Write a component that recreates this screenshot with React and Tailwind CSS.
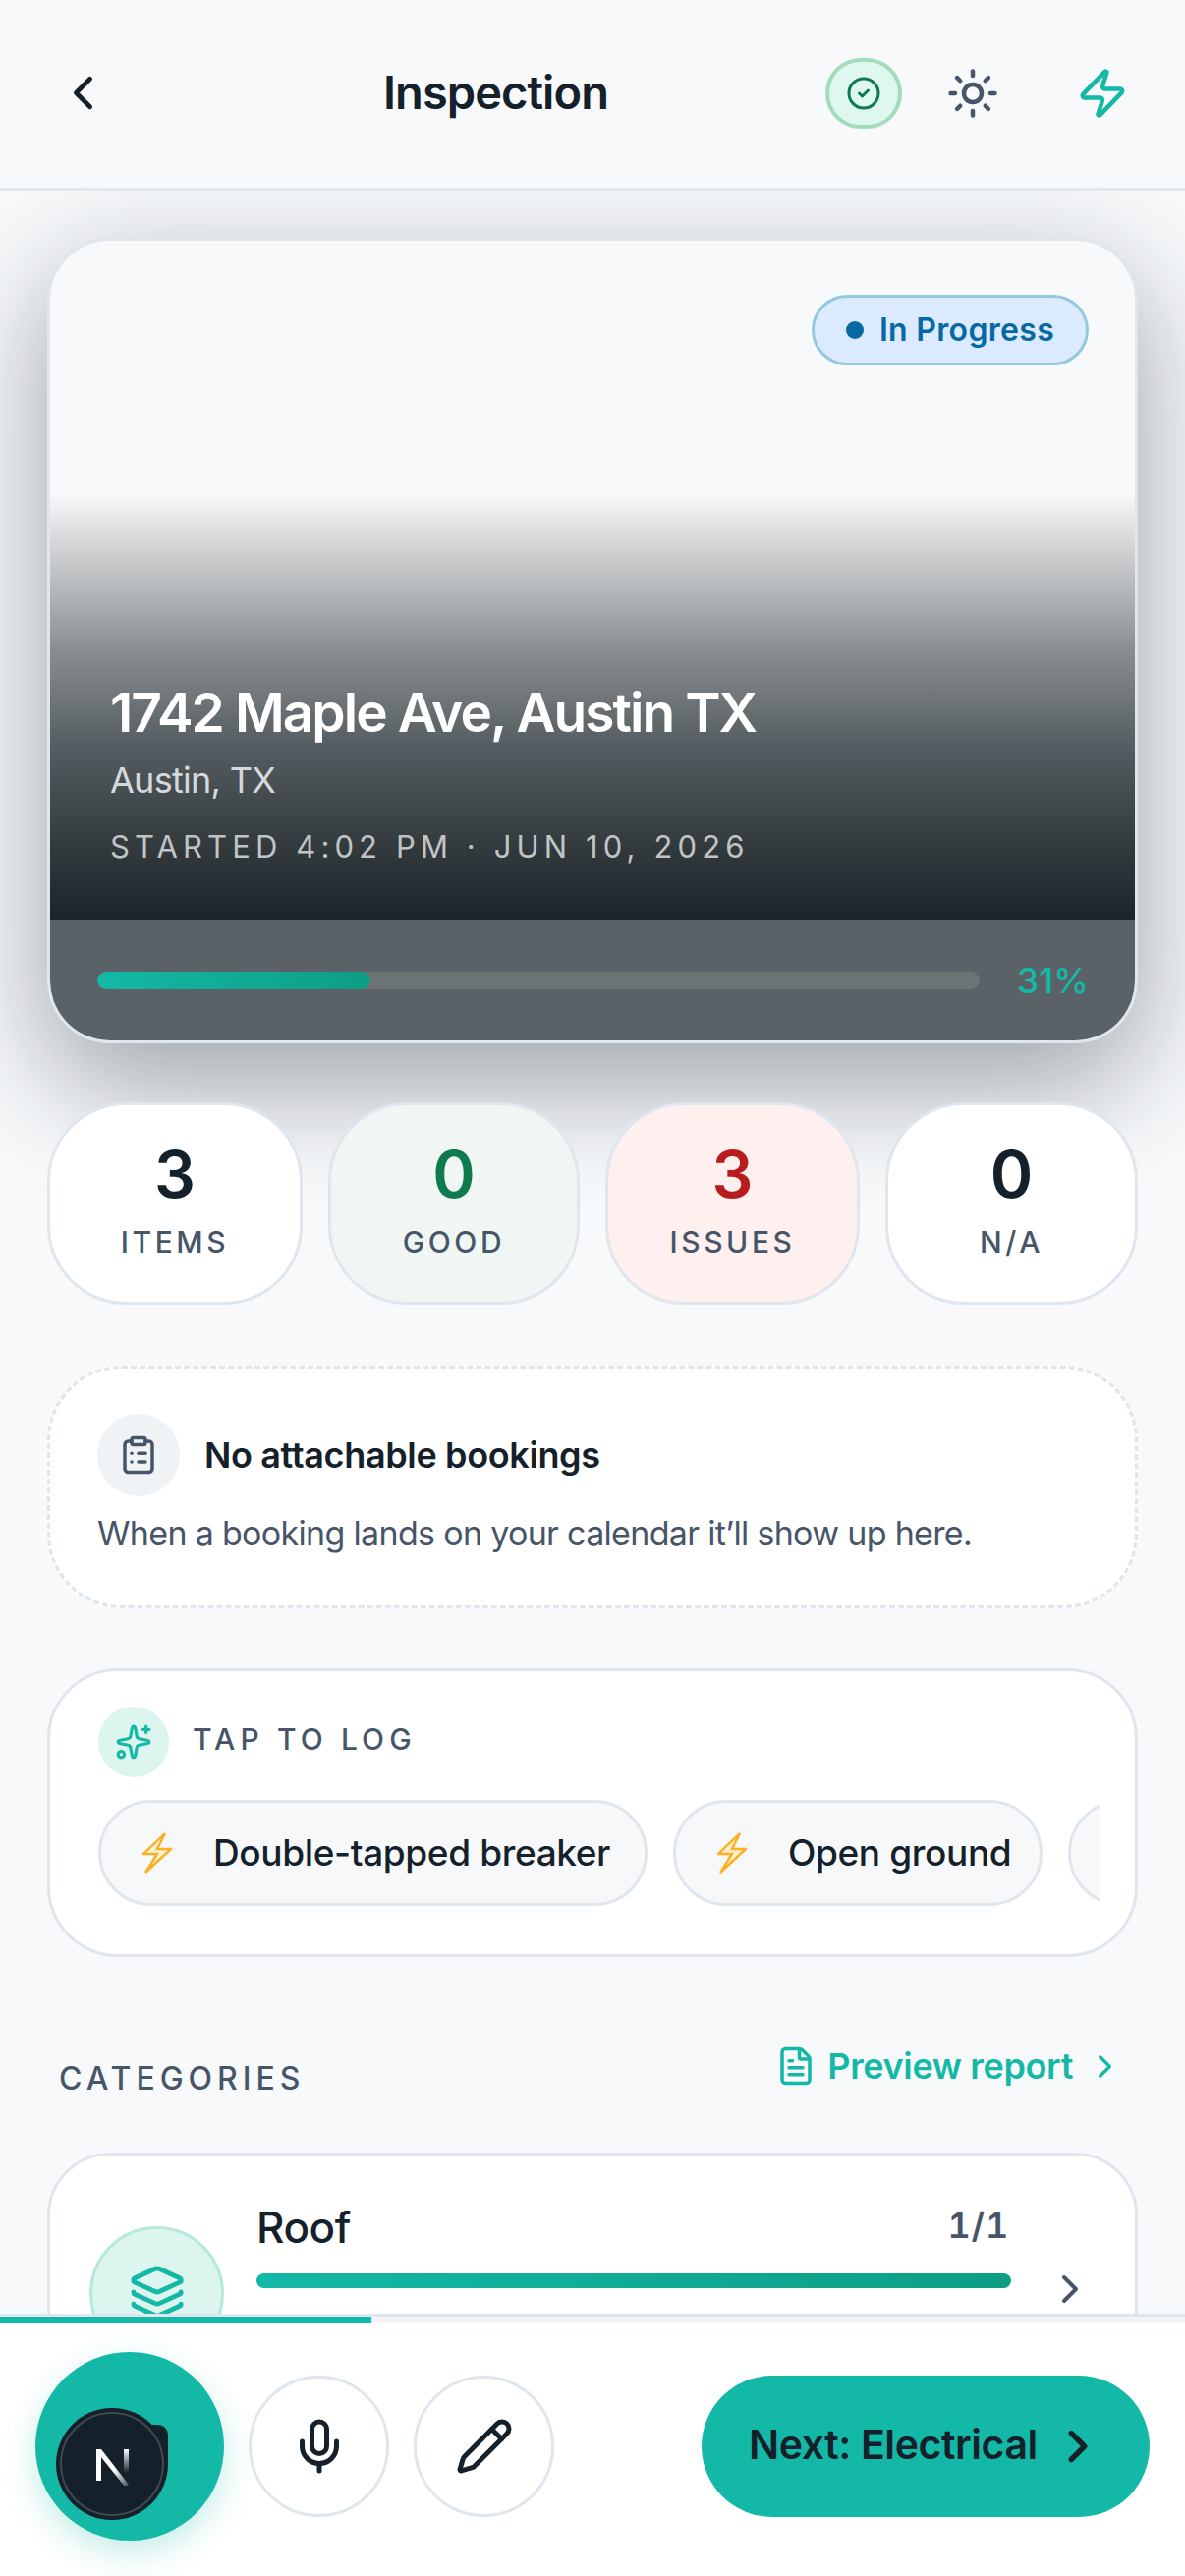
import { ChevronLeft, ChevronRight, CircleCheck, ClipboardList, FileText, Layers, Mic, Pencil, Sparkles, Sun, Zap } from 'lucide-react';

const stats = [
  { value: '3', label: 'ITEMS', bg: 'bg-white', color: 'text-[#14202a]' },
  { value: '0', label: 'GOOD', bg: 'bg-[#f0f6f3]', color: 'text-[#0f7a4d]' },
  { value: '3', label: 'ISSUES', bg: 'bg-[#fef0ef]', color: 'text-[#b91c1c]' },
  { value: '0', label: 'N/A', bg: 'bg-white', color: 'text-[#14202a]' },
];

const chips = [
  { label: 'Double-tapped breaker', width: 'w-[559px]' },
  { label: 'Open ground', width: 'w-[376px]' },
];

function Bolt() {
  return (
    <svg width="30" height="42" viewBox="0 0 30 42" className="shrink-0">
      <path d="M23 1 1 22h14L3 41 29 17H15z" fill="#fdf0d0" stroke="#fbb024" strokeWidth="2.4" strokeLinejoin="miter" />
    </svg>
  );
}

function Chip({ label, width }) {
  return (
    <div className={`${width} h-[108px] shrink-0 rounded-full border-[3px] border-[#dfe6ee] bg-[#f6f8fa] flex items-center pl-[42px] gap-[42px]`}>
      <Bolt />
      <span className="text-[37px] font-medium text-[#14202a] whitespace-nowrap tracking-[-0.01em]">{label}</span>
    </div>
  );
}

export default function App() {
  return (
    <div className="w-[1206px] h-[2622px] overflow-hidden flex flex-col bg-[#f7f9fb] font-['Inter',sans-serif]">
      {/* Header */}
      <header className="h-[194px] shrink-0 border-b-[3px] border-[#dfe6ee] flex items-center pl-[56px] pr-[57px] pb-[2px] relative z-10">
        <ChevronLeft size={57} strokeWidth={2} className="text-[#14202a] shrink-0" />
        <h1 className="ml-[277px] text-[47px] font-semibold text-[#14202a] tracking-[-0.02em] whitespace-nowrap">Inspection</h1>
        <div className="ml-auto flex items-center">
          <div className="w-[78px] h-[72px] rounded-full bg-[#def7ef] border-[4px] border-[#a3dcbc] flex items-center justify-center">
            <CircleCheck size={36} strokeWidth={2} className="text-[#0f7a4d]" />
          </div>
          <Sun size={54} strokeWidth={2} className="ml-[45px] text-[#475569]" />
          <Zap size={54} strokeWidth={2} className="ml-[78px] text-[#14b8a6]" />
        </div>
      </header>

      <main className="flex-1 min-h-0 overflow-hidden px-[48px] pt-[48px]">
        {/* Hero */}
        <section className="h-[820px] rounded-[64px] border-[3px] border-[#dfe6ee] shadow-[0_40px_120px_rgba(20,30,40,0.4)] overflow-hidden flex flex-col bg-[#f7f9fb]">
          <div className="h-[691px] shrink-0 flex flex-col bg-[linear-gradient(to_bottom,#f7f9fb_0px,#f7f9fb_257px,#d0d2d4_314px,#a8abad_374px,#8a8f92_414px,#565d62_514px,#343b3e_614px,#1a242b_691px)]">
            <div className="flex justify-end pt-[55px] pr-[47px]">
              <div className="h-[72px] w-[282px] rounded-full bg-[#dbeafe] border-[3px] border-[#93c9de] flex items-center justify-center gap-[16px]">
                <span className="w-[18px] h-[18px] rounded-full bg-[#0669a3]" />
                <span className="text-[32px] font-semibold text-[#0669a3] tracking-[0.01em] whitespace-nowrap">In Progress</span>
              </div>
            </div>
            <div className="mt-auto pl-[61px] pb-[54px]">
              <h2 className="text-[55px] leading-[64px] font-semibold text-white tracking-[-0.035em] whitespace-nowrap">1742 Maple Ave, Austin TX</h2>
              <p className="mt-[15px] text-[36px] leading-[44px] text-[#d6d9db] tracking-[-0.02em]">Austin, TX</p>
              <p className="mt-[26px] text-[31px] leading-[40px] text-[#c0c4c7] tracking-[0.165em] whitespace-nowrap">STARTED 4:02 PM · JUN 10, 2026</p>
            </div>
          </div>
          <div className="flex-1 bg-[#5a6268] flex items-center pl-[48px] pr-[47px] gap-[38px]">
            <div className="flex-1 h-[18px] rounded-full bg-[#6b7373] overflow-hidden">
              <div className="w-[31%] h-full rounded-full bg-[linear-gradient(to_right,#14b8a6,#0d9e84)]" />
            </div>
            <span className="text-[36px] font-medium text-[#14b8a6]">31%</span>
          </div>
        </section>

        {/* Stats */}
        <section className="mt-[60px] grid grid-cols-[260px_256px_259px_257px] gap-[26px]">
          {stats.map((s) => (
            <div key={s.label} className={`h-[206px] rounded-[80px] border-[3px] border-[#dfe6ee] ${s.bg} flex flex-col items-center pt-[30px]`}>
              <span className={`text-[66px] leading-[80px] font-semibold ${s.color}`}>{s.value}</span>
              <span className="mt-[9px] text-[30px] leading-[40px] font-[550] text-[#475569] tracking-[0.12em]">{s.label}</span>
            </div>
          ))}
        </section>

        {/* Bookings */}
        <section className="mt-[62px] h-[247px] rounded-[76px] border-[3px] border-dashed border-[#dfe6ee] bg-white pl-[48px] pt-[46px]">
          <div className="flex items-center gap-[25px]">
            <div className="w-[84px] h-[84px] rounded-full bg-[#f0f3f6] flex items-center justify-center">
              <ClipboardList size={42} strokeWidth={2} className="text-[#475569]" />
            </div>
            <span className="text-[36px] font-semibold text-[#14202a] tracking-[-0.01em]">No attachable bookings</span>
          </div>
          <p className="mt-[16px] text-[34px] leading-[44px] text-[#475569] tracking-[-0.02em]">When a booking lands on your calendar it’ll show up here.</p>
        </section>

        {/* Tap to log */}
        <section className="mt-[61px] h-[294px] rounded-[72px] border-[3px] border-[#dfe6ee] bg-white pl-[49px] pr-[36px] pt-[36px]">
          <div className="flex items-center gap-[24px]">
            <div className="w-[72px] h-[72px] rounded-full bg-[#dcf6ef] flex items-center justify-center">
              <Sparkles size={38} strokeWidth={2} className="text-[#14b8a6]" />
            </div>
            <span className="pb-[5px] text-[30px] font-[550] text-[#475569] tracking-[0.17em]">TAP TO LOG</span>
          </div>
          <div className="mt-[23px] flex gap-[26px] overflow-hidden">
            {chips.map((c) => (
              <Chip key={c.label} label={c.label} width={c.width} />
            ))}
            <div className="w-[200px] h-[108px] shrink-0 rounded-full border-[3px] border-[#dfe6ee] bg-[#f6f8fa]" />
          </div>
        </section>

        {/* Categories */}
        <div className="mt-[89px] flex items-start justify-between pl-[12px] pr-[14px]">
          <span className="mt-[15px] text-[32px] leading-[40px] font-[550] text-[#475569] tracking-[0.155em]">CATEGORIES</span>
          <div className="flex items-center">
            <FileText size={42} strokeWidth={2} className="text-[#14b8a6]" />
            <span className="ml-[11px] text-[36px] leading-[44px] font-semibold text-[#14b8a6] tracking-[-0.01em]">Preview report</span>
            <ChevronRight size={39} strokeWidth={2} className="ml-[13px] text-[#14b8a6]" />
          </div>
        </div>

        <section className="mt-[55px] h-[300px] rounded-[64px] border-[3px] border-[#dfe6ee] bg-white flex pl-[40px] pt-[48px]">
          <div className="w-[137px] h-[137px] mt-[24px] rounded-full bg-[#dcf6ef] border-[3px] border-[#b5e9dd] flex items-center justify-center shrink-0">
            <Layers size={58} strokeWidth={2} className="mb-[4px] text-[#14b8a6]" />
          </div>
          <div className="ml-[33px] w-[768px] shrink-0">
            <div className="flex items-center justify-between">
              <span className="text-[44px] leading-[50px] font-medium text-[#14202a] tracking-[-0.01em]">Roof</span>
              <span className="mr-[2px] pb-[4px] text-[36px] leading-[44px] font-semibold text-[#475569] tabular-nums tracking-[0.02em]">1/1</span>
            </div>
            <div className="mt-[22px] h-[15px] rounded-full bg-[linear-gradient(to_right,#14b8a6,#0d9e84)]" />
          </div>
          <ChevronRight size={48} strokeWidth={2} className="ml-[36px] mt-[64px] text-[#475569] shrink-0" />
        </section>
      </main>

      {/* Bottom bar */}
      <footer className="h-[267px] shrink-0 bg-white border-t-[3px] border-[#dfe6ee] relative z-10 flex flex-col">
        <div className="h-[6px] bg-[#f1f5f9]">
          <div className="w-[378px] h-full bg-[#14b8a6]" />
        </div>
        <div className="flex items-start pl-[36px] pr-[36px] pt-[30px]">
          <div className="w-[192px] h-[192px] rounded-full bg-[#14b8a6] shadow-[0_12px_32px_rgba(20,184,166,0.25)] shrink-0 relative">
            <div className="absolute left-[110px] top-[74px] w-[25px] h-[50px] rounded-[10px] bg-[#14202a]" />
            <div className="absolute left-[21px] top-[57px] w-[114px] h-[114px] rounded-full bg-[#14202a] flex items-center justify-center">
              <div className="w-[106px] h-[106px] rounded-full border-[2px] border-[#3f4a50] flex items-center justify-center">
                <svg width="40" height="40" viewBox="0 0 40 40" className="ml-[2px] mt-[4px]">
                  <defs>
                    <linearGradient id="nv" x1="0" y1="0" x2="0" y2="1">
                      <stop offset="0" stopColor="#fff" />
                      <stop offset="1" stopColor="#fff" stopOpacity="0" />
                    </linearGradient>
                    <linearGradient id="nd" x1="0" y1="0" x2="1" y2="1">
                      <stop offset="0.55" stopColor="#fff" />
                      <stop offset="1" stopColor="#fff" stopOpacity="0.2" />
                    </linearGradient>
                  </defs>
                  <path d="M3 3h5v32H3z" fill="#fff" />
                  <path d="M3 3h5l28 36-4 2L3 5z" fill="url(#nd)" />
                  <path d="M31 3h5v24h-5z" fill="url(#nv)" />
                </svg>
              </div>
            </div>
          </div>
          <div className="ml-[25px] mt-[24px] w-[143px] h-[144px] rounded-full border-[3px] border-[#dfe6ee] flex items-center justify-center shrink-0">
            <Mic size={60} strokeWidth={2} className="text-[#14202a]" />
          </div>
          <div className="ml-[25px] mt-[24px] w-[143px] h-[144px] rounded-full border-[3px] border-[#dfe6ee] flex items-center justify-center shrink-0">
            <Pencil size={60} strokeWidth={2} className="text-[#14202a]" />
          </div>
          <div className="ml-auto mt-[24px] w-[456px] h-[144px] rounded-full bg-[#14b8a6] flex items-center pl-[48px]">
            <span className="pb-[2px] text-[41px] font-semibold text-[#14202a] tracking-[-0.01em] whitespace-nowrap">Next: Electrical</span>
            <ChevronRight size={54} strokeWidth={2.4} className="ml-[14px] text-[#14202a]" />
          </div>
        </div>
      </footer>
    </div>
  );
}
